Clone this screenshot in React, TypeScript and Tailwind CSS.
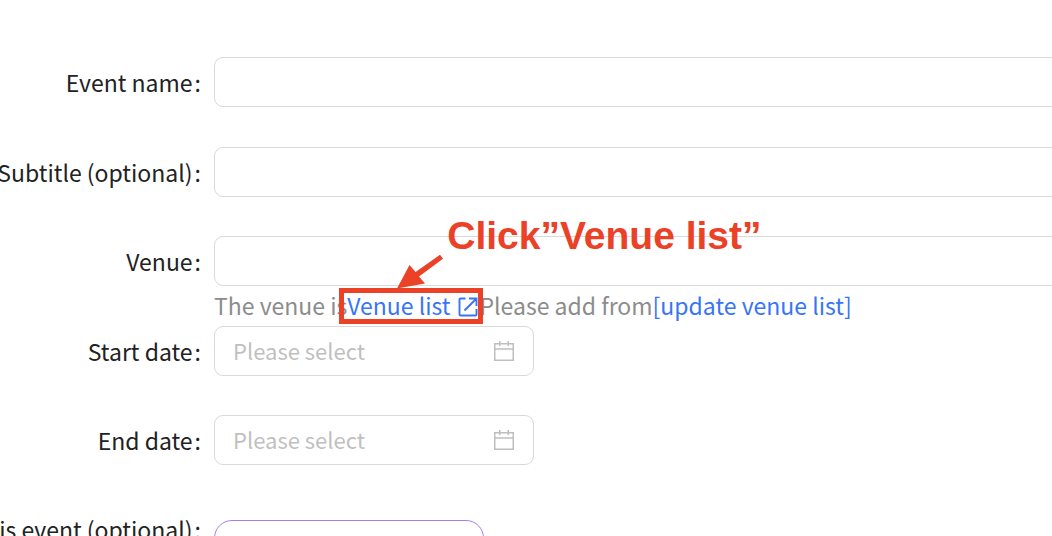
import type { ReactNode } from "react";

const inputBox =
  "h-[50px] rounded-[9px] border border-[#d9d9d9] bg-white text-[22px] outline-none placeholder:text-[#bfbfbf] placeholder:opacity-100";

function CalendarIcon() {
  return (
    <svg viewBox="0 0 22 22" className="h-[22px] w-[22px]" fill="none" stroke="#bfbfbf" strokeWidth="1.5">
      <path d="M1.75 3.75h18.5v16.5H1.75zM1.75 9h18.5M6.75 1v5M15.25 1v5" />
    </svg>
  );
}

function OpenIcon() {
  return (
    <svg viewBox="0 0 20 20" className="mt-1 h-5 w-5" fill="none" stroke="#3875f6" strokeWidth="1.9">
      <path d="M7.5 1.5H2.5a1 1 0 0 0-1 1v15a1 1 0 0 0 1 1h15a1 1 0 0 0 1-1V12" />
      <path d="M11 1.5h7.5V9M18 2 6.5 13.5" />
    </svg>
  );
}

function Row({ id, label, children }: { id: string; label: string; children: ReactNode }) {
  return (
    <div className="flex items-start">
      <div className="flex h-[50px] w-[214px] shrink-0 items-center justify-end pr-[13px]">
        <label htmlFor={id} className="flex gap-0.5 whitespace-nowrap pt-px">
          <span>{label}</span>
          <span>:</span>
        </label>
      </div>
      <div className="min-w-0 flex-1">{children}</div>
    </div>
  );
}

function DateField({ id }: { id: string }) {
  return (
    <div className="relative w-[320px]">
      <input id={id} type="text" placeholder="Please select" className={`${inputBox} w-full pb-0.5 pl-[18px] pr-12`} />
      <button type="button" aria-label="Open calendar" className="absolute top-3.5 right-[19px]">
        <CalendarIcon />
      </button>
    </div>
  );
}

function Annotation() {
  return (
    <span className="pointer-events-none absolute inset-0 text-[#eb4126]">
      <span className="absolute top-0 -left-2 h-9 w-36 border-5 border-current" />
      <svg viewBox="0 0 46 36" className="absolute -top-[34px] left-[50px] h-9 w-[46px]" fill="currentColor">
        <path d="M43 .7 46 4.8 22 22.4 28 29.5 0 34.5 12.5 11 18.6 17.9z" />
      </svg>
      <span
        className="absolute -top-[76px] left-[100px] text-[39px] leading-12 font-bold whitespace-nowrap"
        style={{ fontFamily: '"Liberation Sans", Arial, sans-serif' }}
      >
        Click”Venue list”
      </span>
    </span>
  );
}

export default function App() {
  return (
    <main className="h-screen overflow-hidden bg-white pt-[57px] text-[23px] text-[#222] [font-family:'Noto_Sans_CJK_JP',sans-serif]">
      <form className="flex flex-col gap-[39px]">
        <Row id="name" label="Event name">
          <input id="name" type="text" className={`${inputBox} mb-px block w-[calc(100%+16px)] px-[18px]`} />
        </Row>
        <Row id="subtitle" label="Subtitle (optional)">
          <input id="subtitle" type="text" className={`${inputBox} block w-[calc(100%+16px)] px-[18px]`} />
        </Row>
        <div className="flex flex-col">
          <Row id="venue" label="Venue">
            <input id="venue" type="text" className={`${inputBox} block w-[calc(100%+16px)] px-[18px]`} />
            <p className="flex h-10 items-center pb-0.5 whitespace-nowrap text-[#8c8c8c]">
              <span>The venue is</span>
              <span className="relative flex items-center">
                <a href="#venues" className="flex items-center gap-[7px] pr-0.5 text-[#3875f6]">
                  Venue list
                  <OpenIcon />
                </a>
                <Annotation />
              </span>
              <span>Please add from</span>
              <a href="#update" className="text-[#3875f6]">
                [update venue list]
              </a>
            </p>
          </Row>
          <Row id="start" label="Start date">
            <DateField id="start" />
          </Row>
        </div>
        <Row id="end" label="End date">
          <DateField id="end" />
        </Row>
        <Row id="image" label="Image of this event (optional)">
          <button
            id="image"
            type="button"
            aria-label="Select"
            className="mt-4 block h-[50px] w-[270px] rounded-[18px] border border-[#a67df0] bg-white"
          />
        </Row>
      </form>
    </main>
  );
}
